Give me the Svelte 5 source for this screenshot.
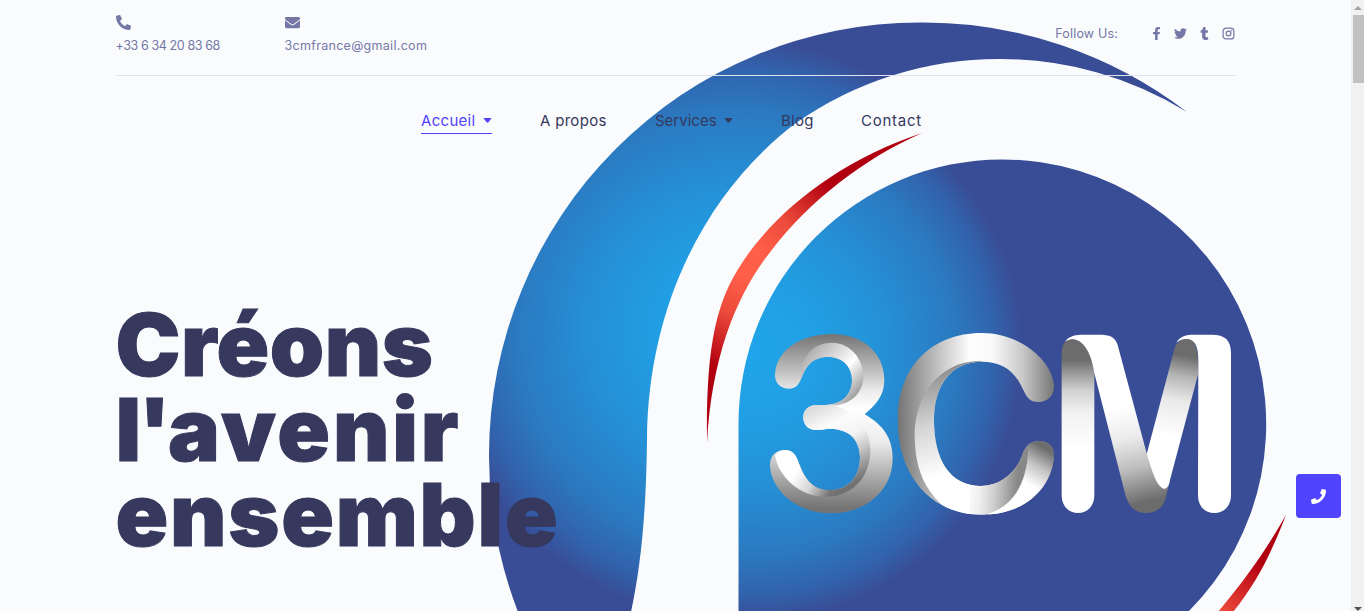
<script>
  const phone =
    'M497.39 361.8l-112-48a24 24 0 0 0-28 6.9l-49.6 60.6A370.66 370.66 0 0 1 130.6 204.11l60.6-49.6a23.94 23.94 0 0 0 6.9-28l-48-112A24.16 24.16 0 0 0 122.6.61l-104 24A24 24 0 0 0 0 48c0 256.5 207.9 464 464 464a24 24 0 0 0 23.4-18.6l24-104a24.29 24.29 0 0 0-14.01-27.6z';
  const envelope =
    'M502.3 190.8c3.9-3.1 9.7-.2 9.7 4.7V400c0 26.5-21.5 48-48 48H48c-26.5 0-48-21.5-48-48V195.6c0-5 5.7-7.8 9.7-4.7 22.4 17.4 52.1 39.5 154.1 113.6 21.1 15.4 56.7 47.8 92.2 47.6 35.7.3 72-32.8 92.3-47.6 102-74.1 131.6-96.3 154-113.7zM256 320c23.2.4 56.6-29.2 73.4-41.4 132.7-96.3 142.8-104.7 173.4-128.7 5.8-4.5 9.2-11.5 9.2-18.9v-19c0-26.5-21.5-48-48-48H48c-26.5 0-48 21.5-48 48v19c0 7.4 3.4 14.3 9.2 18.9 30.6 23.9 40.7 32.4 173.4 128.7 16.8 12.2 50.2 41.8 73.4 41.4z';
  const call =
    'M493.4 24.6l-104-24c-11.3-2.6-22.9 3.3-27.5 13.9l-48 112c-4.2 9.8-1.4 21.3 6.9 28l60.6 49.6c-36 76.7-98.9 140.5-177.2 177.2l-49.6-60.6c-6.8-8.3-18.2-11.1-28-6.9l-112 48C3.9 366.5-2 378.1.6 389.4l24 104C27.1 504.2 36.7 512 48 512c256.1 0 464-207.5 464-464 0-11.2-7.7-20.9-18.6-23.4z';
  const socials = [
    { name: 'facebook', box: '-96 0 512 512', d: 'M279.14 288l14.22-92.66h-88.91v-60.13c0-25.35 12.42-50.06 52.24-50.06h40.42V6.26S260.43 0 225.36 0c-73.22 0-121.08 44.38-121.08 124.72v70.62H22.89V288h81.39v224h100.17V288z' },
    { name: 'twitter', box: '0 0 512 512', d: 'M459.37 151.716c.325 4.548.325 9.097.325 13.645 0 138.72-105.583 298.558-298.558 298.558-59.452 0-114.68-17.219-161.137-47.106 8.447.974 16.568 1.299 25.34 1.299 49.055 0 94.213-16.568 130.274-44.832-46.132-.975-84.792-31.188-98.112-72.772 6.498.974 12.995 1.624 19.818 1.624 9.421 0 18.843-1.3 27.614-3.573-48.081-9.747-84.143-51.98-84.143-102.985v-1.299c13.969 7.797 30.214 12.67 47.431 13.319-28.264-18.843-46.781-51.005-46.781-87.391 0-19.492 5.197-37.36 14.294-52.954 51.655 63.675 129.3 105.258 216.365 109.807-1.624-7.797-2.599-15.918-2.599-24.04 0-57.828 46.782-104.934 104.934-104.934 30.213 0 57.502 12.67 76.67 33.137 23.715-4.548 46.456-13.32 66.599-25.34-7.798 24.366-24.366 44.833-46.132 57.827 21.117-2.273 41.584-8.122 60.426-16.243-14.292 20.791-32.161 39.308-52.628 54.253z' },
    { name: 'tumblr', box: '-96 0 512 512', d: 'M309.8 480.3c-13.6 14.5-50 31.7-97.4 31.7-120.8 0-147-88.8-147-140.6v-144H17.9c-5.5 0-10-4.5-10-10v-68c0-7.2 4.5-13.6 11.3-16 62-21.8 81.5-76 84.3-117.1.8-11 6.5-16.3 16.1-16.3h70.9c5.5 0 10 4.5 10 10v115.2h83c5.5 0 10 4.4 10 9.9v81.7c0 5.5-4.5 10-10 10h-83.4V360c0 34.2 23.7 53.6 68 35.8 4.8-1.9 9-3.2 12.7-2.2 3.5.9 5.8 3.4 7.4 7.9l22 64.3c1.8 5 3.3 10.6-.4 14.5z' }
  ];
  const links = [
    { label: 'Accueil', key: 'accueil', caret: true, active: true },
    { label: 'A propos', key: 'apropos' },
    { label: 'Services', key: 'services', caret: true },
    { label: 'Blog', key: 'blog' },
    { label: 'Contact', key: 'contact' }
  ];
</script>

{#snippet blues()}
  <stop offset="0" stop-color="#20a4e9" />
  <stop offset=".25" stop-color="#219fe4" />
  <stop offset=".5" stop-color="#2590d6" />
  <stop offset=".75" stop-color="#2b7ac1" />
  <stop offset=".9" stop-color="#3163ac" />
  <stop offset="1" stop-color="#394d96" />
{/snippet}

<div class="page">
  <main>
    <svg class="art" viewBox="0 0 1351 611" aria-hidden="true">
      <defs>
        <radialGradient id="swoosh" gradientUnits="userSpaceOnUse" cx="735" cy="330" r="291">{@render blues()}</radialGradient>
        <radialGradient id="disc" gradientUnits="userSpaceOnUse" cx="751" cy="350" r="271">{@render blues()}</radialGradient>
        <radialGradient id="red" gradientUnits="userSpaceOnUse" cx="750" cy="262" r="110">
          <stop offset=".15" stop-color="#ff5f49" /><stop offset=".5" stop-color="#ec4a3b" /><stop offset="1" stop-color="#b0000f" />
        </radialGradient>
        <linearGradient id="red2" gradientUnits="userSpaceOnUse" x1="1222" y1="614" x2="1261" y2="562">
          <stop offset="0" stop-color="#ef4b3c" /><stop offset="1" stop-color="#b0000f" />
        </linearGradient>
        <linearGradient id="three" gradientUnits="userSpaceOnUse" x1="0" y1="72" x2="0" y2="610">
          <stop offset="0" stop-color="#747474" /><stop offset=".2" stop-color="#bdbdbd" /><stop offset=".32" stop-color="#ececec" /><stop offset=".42" stop-color="#fff" />
          <stop offset=".6" stop-color="#ececec" /><stop offset=".8" stop-color="#aaa" /><stop offset=".97" stop-color="#747474" />
        </linearGradient>
        <linearGradient id="threeTop" gradientUnits="userSpaceOnUse" x1="160" y1="130" x2="310" y2="265">
          <stop offset="0" stop-color="#a9a9a9" /><stop offset=".35" stop-color="#d8d8d8" /><stop offset=".62" stop-color="#fff" /><stop offset="1" stop-color="#a0a0a0" />
        </linearGradient>
        <linearGradient id="threeMid" gradientUnits="userSpaceOnUse" x1="190" y1="280" x2="310" y2="520">
          <stop offset="0" stop-color="#d6d6d6" /><stop offset=".3" stop-color="#fcfcfc" /><stop offset=".5" stop-color="#f4f4f4" /><stop offset=".7" stop-color="#c4c4c4" /><stop offset="1" stop-color="#717171" />
        </linearGradient>
        <linearGradient id="threeLow" gradientUnits="userSpaceOnUse" x1="110" y1="470" x2="240" y2="550">
          <stop offset=".2" stop-color="#fff" /><stop offset=".6" stop-color="#d6d6d6" /><stop offset="1" stop-color="#737373" />
        </linearGradient>
        <linearGradient id="cee" gradientUnits="userSpaceOnUse" x1="443" y1="0" x2="912" y2="0">
          <stop offset="0" stop-color="#747474" /><stop offset=".3" stop-color="#cecece" /><stop offset=".46" stop-color="#fdfdfd" />
          <stop offset=".6" stop-color="#fafafa" /><stop offset=".8" stop-color="#c8c8c8" /><stop offset="1" stop-color="#777" />
        </linearGradient>
        <linearGradient id="ceeIn" gradientUnits="userSpaceOnUse" x1="520" y1="190" x2="600" y2="490">
          <stop offset="0" stop-color="#8e8e8e" /><stop offset=".5" stop-color="#d4d4d4" /><stop offset="1" stop-color="#fff" />
        </linearGradient>
        <linearGradient id="ceeLow" gradientUnits="userSpaceOnUse" x1="640" y1="540" x2="800" y2="550">
          <stop offset="0" stop-color="#fff" /><stop offset=".3" stop-color="#f0f0f0" /><stop offset=".6" stop-color="#ccc" /><stop offset="1" stop-color="#888" />
        </linearGradient>
        <linearGradient id="ceeEnd" gradientUnits="userSpaceOnUse" x1="890" y1="420" x2="830" y2="520">
          <stop offset="0" stop-color="#6e6e6e" /><stop offset=".5" stop-color="#c6c6c6" /><stop offset="1" stop-color="#fff" />
        </linearGradient>
        <linearGradient id="leg" gradientUnits="userSpaceOnUse" x1="0" y1="150" x2="0" y2="410">
          <stop offset="0" stop-color="#6c6c6c" /><stop offset=".15" stop-color="#999" /><stop offset=".35" stop-color="#d0d0d0" />
          <stop offset=".6" stop-color="#f1f1f1" /><stop offset="1" stop-color="#fff" />
        </linearGradient>
        <linearGradient id="down" gradientUnits="userSpaceOnUse" x1="270" y1="300" x2="345" y2="600">
          <stop offset="0" stop-color="#fff" /><stop offset=".3" stop-color="#ececec" /><stop offset=".6" stop-color="#bebebe" /><stop offset=".95" stop-color="#6c6c6c" />
        </linearGradient>
        <linearGradient id="up" gradientUnits="userSpaceOnUse" x1="495" y1="137" x2="450" y2="380">
          <stop offset="0" stop-color="#6c6c6c" /><stop offset=".25" stop-color="#b4b4b4" /><stop offset=".55" stop-color="#e9e9e9" /><stop offset="1" stop-color="#fff" />
        </linearGradient>
        <clipPath id="ceeClip"><path d="M443,330 C443,170 545,69 695,69 C810,69 905,150 912,225 C914,255 895,275 865,276 C840,276 830,262 820,240 C795,185 760,155 695,155 C600,155 552,230 552,330 C552,450 600,528 693,528 C750,528 795,490 815,440 C825,410 840,393 868,393 C895,393 914,410 912,440 C905,530 830,614 695,614 C545,614 443,500 443,330Z" /></clipPath>
      </defs>

      <path fill="url(#swoosh)" d="M1187,112 A433,433 0 0 0 920,22.500 A431,433 0 0 0 489,455 A431,433 0 0 0 518,612 L631,612 C640,570 646,520 647,440 C648,300 710,188 796,123 A354,354 0 0 1 1000,59 A354,354 0 0 1 1187,112Z" />
      <path fill="url(#disc)" d="M738.500,612 V424 A263.700,264.500 0 0 1 1002,159.500 A263.700,264.500 0 0 1 1188,612Z" />
      <path fill="url(#red)" d="M922,133 C840,160 775,212 742,263 C715,303 706,350 707,443 C712,350 740,290 771,251 C810,200 865,158 922,133Z" />
      <path fill="url(#red2)" d="M1286,515 C1269,545 1250,574 1218,612 H1233 C1257,582 1270,556 1286,515Z" />

      <g transform="translate(750 310) scale(.33333)">
        <path fill="url(#three)" d="M75,195 C78,115 160,72 245,72 C340,72 403,130 403,210 C403,255 380,282 344,313 C400,345 428,385 428,445 C428,540 350,610 242,610 C140,610 62,540 60,465 C60,435 80,420 105,420 C130,420 140,440 145,455 C165,510 190,540 238,540 C295,540 330,500 330,440 C328,385 295,357 240,356 C225,356 215,360 198,360 C175,360 160,345 160,322 C160,300 175,285 200,285 L230,285 C275,283 306,255 306,210 C306,168 275,141 235,141 C190,141 172,165 158,195 C148,222 140,236 117,236 C92,236 75,220 75,195Z" />
        <path fill="url(#threeTop)" d="M152,206 C150,140 190,98 245,98 C300,98 340,145 340,200 C340,250 300,287 240,287 L225,285 C275,283 306,255 306,210 C306,168 275,141 235,141 C190,141 172,165 158,195Z" />
        <path fill="url(#threeLow)" d="M75,435 C85,422 95,420 105,420 C130,420 140,440 145,455 C165,510 190,540 238,540 Q255,540 268,536 V555 Q248,560 225,560 C150,560 85,500 75,435Z" />
        <path fill="url(#threeMid)" d="M200,285 H240 C290,290 361,340 361,420 C361,495 315,548 252,559 L244,540 C295,540 330,500 330,440 C328,385 295,357 240,356 C225,356 215,360 198,360 C175,360 160,345 160,322 C160,300 175,285 200,285Z" />

        <g clip-path="url(#ceeClip)">
          <rect x="440" y="60" width="480" height="560" fill="url(#cee)" />
          <path fill="url(#ceeIn)" d="M695,153 C560,150 495,270 494,370 C494,470 520,545 600,604 Q640,620 662,620 V500 L575,400 V250 L620,175 L695,158Z" />
          <path fill="url(#ceeLow)" d="M660,500 H750 L810,420 L836,405 C835,510 790,590 715,611 L690,620 H660Z" />
          <path fill="url(#ceeEnd)" d="M715,612 C795,585 833,520 835,408 L835,385 H920 V620 H715Z" />
        </g>
      </g>

      <g transform="translate(1020 310) scale(.33333)">
        <path fill="url(#leg)" d="M125,130 C125,105 135,87 155,87 C190,87 215,130 223,190 V555 C223,590 200,609 174,609 C148,609 125,590 125,555Z" />
        <path fill="url(#up)" d="M378,440 L465,110 C475,95 485,87 500,87 C525,87 536,110 535,190 L450,510 C446,532 440,540 432,540 C405,530 390,480 378,440Z" />
        <path fill="url(#down)" d="M135,94 C150,76 170,74 190,74 H235 C270,74 285,80 293,105 L380,430 C395,480 410,532 432,536 C440,536 446,528 448,515 L438,560 C430,595 405,609 379,609 C345,609 325,590 315,550 L223,190 C215,130 190,87 155,87Z" />
        <path fill="#fff" d="M469,98 C480,78 500,74 520,74 H575 C615,74 633,90 633,130 V555 C633,590 610,609 583,609 C556,609 534,590 534,555 L535,150 C535,110 525,87 500,87 C485,87 478,92 469,98Z" />
      </g>
    </svg>

    <header>
      <div class="topbar">
        <div class="info tel">
          <svg viewBox="0 0 512 512"><path d={phone} /></svg>
          <span>+33 6 34 20 83 68</span>
        </div>
        <div class="info mail">
          <svg viewBox="0 0 512 512"><path d={envelope} /></svg>
          <span>3cmfrance@gmail.com</span>
        </div>
        <div class="follow">
          <span>Follow Us:</span>
          <div class="socials">
            {#each socials as s (s.name)}
              <svg viewBox={s.box}><path d={s.d} /></svg>
            {/each}
            <svg viewBox="0 0 13 13">
              <rect x="1.100" y="1.100" width="10.800" height="10.800" rx="3" fill="none" stroke="currentColor" stroke-width="1.200" />
              <circle cx="6.500" cy="6.500" r="2.400" fill="none" stroke="currentColor" stroke-width="1.200" />
              <circle cx="9.600" cy="3.400" r=".75" />
            </svg>
          </div>
        </div>
      </div>
      <nav>
        {#each links as l (l.key)}
          <span class="link {l.key}" class:active={l.active}>
            <span>{l.label}</span>
            {#if l.caret}<i class="caret"></i>{/if}
          </span>
        {/each}
      </nav>
    </header>

    <h1>
      <span class="l1">Créons</span>
      <span class="l2"><b>l'</b>avenir</span>
      <span class="l3">ensemble</span>
    </h1>

    <div class="call"><svg viewBox="0 0 512 512"><path d={call} /></svg></div>
  </main>
  <aside>
    <i class="arrow up"></i>
    <div class="thumb"></div>
    <i class="arrow down"></i>
  </aside>
</div>

<style>
  .page {
    display: flex;
    width: 1364px;
    height: 611px;
    overflow: hidden;
    background: #f9fbfd;
    font-family: Inter, 'Open Sans', sans-serif;
  }
  main {
    position: relative;
    flex: 1;
  }
  .art {
    position: absolute;
    inset: 0;
    width: 1351px;
    height: 611px;
  }
  header {
    position: relative;
    width: 1120px;
    margin-left: 115.500px;
  }
  .topbar {
    display: flex;
    box-sizing: border-box;
    height: 76px;
    padding-top: 15px;
    border-bottom: 1px solid #dfe3f0;
    color: #7578a6;
    font-size: 12.500px;
  }
  .topbar svg {
    display: block;
    fill: currentColor;
  }
  .info {
    display: flex;
    flex-direction: column;
    gap: 7px;
    white-space: nowrap;
  }
  .info svg {
    width: 15px;
    height: 15px;
  }
  .info span {
    line-height: 18px;
  }
  .tel {
    width: 169px;
    letter-spacing: -0.400px;
  }
  .mail {
    letter-spacing: 0.300px;
  }
  .follow {
    display: flex;
    align-items: center;
    height: 36px;
    margin-left: auto;
    font-size: 12.500px;
    letter-spacing: 0.180px;
    gap: 32px;
  }
  .socials {
    display: flex;
    gap: 11px;
    margin-right: 0.500px;
  }
  .socials svg {
    width: 13px;
    height: 13px;
  }
  nav {
    display: flex;
    margin: 33px 0 0 305.500px;
    gap: 48px;
    color: #36385d;
    font-size: 15px;
    white-space: nowrap;
  }
  .link {
    display: flex;
    align-items: center;
    box-sizing: border-box;
    height: 25px;
    padding-bottom: 2px;
    border-bottom: 1px solid transparent;
    letter-spacing: 0.300px;
  }
  .active {
    color: #5142fc;
    border-color: #5142fc;
  }
  .accueil,
  .services {
    justify-content: space-between;
  }
  .accueil { width: 71px; }
  .apropos { width: 67px; }
  .services { width: 78px; letter-spacing: 0; }
  .blog { width: 32px; }
  .contact { letter-spacing: 0.750px; }
  .caret {
    width: 9px;
    height: 5px;
    background: currentColor;
    clip-path: polygon(0 0, 100% 0, 58% 100%, 42% 100%);
  }
  h1 {
    position: relative;
    margin: 168px 0 0 115.500px;
    color: #36385d;
    font-size: 87px;
    font-weight: 900;
    line-height: 85.200px;
    -webkit-text-stroke: 1px #36385d;
  }
  h1 span {
    display: block;
    width: max-content;
  }
  h1 b {
    font-weight: inherit;
    letter-spacing: -2.800px;
  }
  .l1 { letter-spacing: 0.500px; }
  .l2 { letter-spacing: 2.800px; }
  .l3 { letter-spacing: 1.750px; }
  .call {
    position: absolute;
    left: 1296px;
    top: 474px;
    display: grid;
    place-items: center;
    width: 45px;
    height: 44px;
    border-radius: 4px;
    background: #5144ff;
  }
  .call svg {
    width: 15px;
    height: 15px;
    fill: #fff;
  }
  aside {
    display: flex;
    flex-direction: column;
    width: 13px;
    height: 611px;
    background: #f1f1f1;
  }
  .arrow {
    align-self: flex-end;
    margin-right: 2px;
    border: 4px solid transparent;
  }
  .arrow.up {
    margin-top: 6px;
    border-top: 0;
    border-bottom-color: #a3a3a3;
  }
  .arrow.down {
    margin-top: auto;
    border-bottom: 0;
    border-top-color: #505050;
  }
  .thumb {
    height: 68px;
    margin: 5px 0 0 2px;
    background: #c1c1c1;
  }
</style>
